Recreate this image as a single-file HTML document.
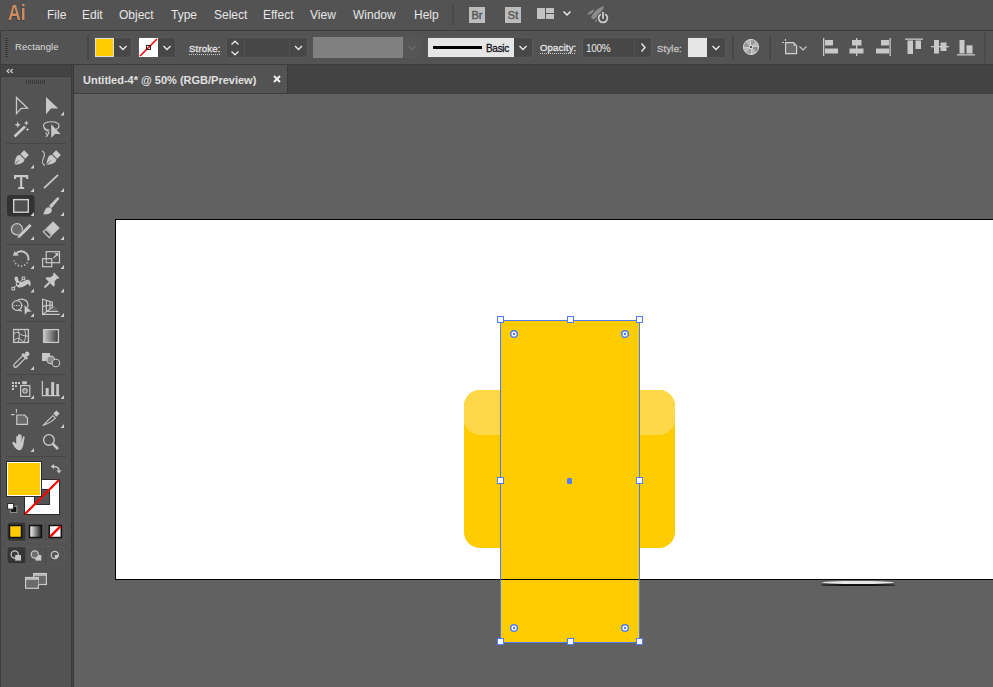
<!DOCTYPE html>
<html><head><meta charset="utf-8">
<style>
*{margin:0;padding:0;box-sizing:border-box}
html,body{width:993px;height:687px;overflow:hidden;background:#616161;font-family:"Liberation Sans",sans-serif}
.a{position:absolute}
#menubar{left:0;top:0;width:993px;height:30px;background:#535353}
#menuline{left:0;top:30px;width:993px;height:1px;background:#3d3d3d}
#ctrl{left:0;top:31px;width:993px;height:33px;background:#535353}
#ctrlline{left:0;top:64px;width:993px;height:1px;background:#3d3d3d}
#tabstrip{left:74px;top:65px;width:919px;height:28px;background:#434343}
#tab{left:74px;top:65px;width:214px;height:28px;background:#535353;border-right:1px solid #3a3a3a}
#tabline{left:74px;top:93px;width:919px;height:1px;background:#3d3d3d}
#canvas{left:74px;top:94px;width:919px;height:593px;background:#616161}
#tools{left:0;top:65px;width:71px;height:623px;background:#535353}
#toolshead{left:1px;top:65px;width:70px;height:11px;background:#434343;border-bottom:0}
#toolsheadline{left:1px;top:76px;width:70px;height:1px;background:#3d3d3d}
#toolsleft{left:0;top:65px;width:1px;height:622px;background:#3d3d3d}
#toolsedge{left:71px;top:65px;width:3px;height:622px;background:linear-gradient(90deg,#393939 0 1px,#454545 1px 2px,#393939 2px 3px)}
.menu{top:8px;font-size:12px;color:#e6e6e6;line-height:14px;white-space:nowrap}
.grp{background:#474747;border:1px solid #595959;border-radius:3px}
.lbl{font-size:11px;color:#d8d8d8;white-space:nowrap;line-height:13px}
</style></head><body>
<div id="menubar" class="a"></div>
<div id="menuline" class="a"></div>
<div id="ctrl" class="a"></div>
<div id="ctrlline" class="a"></div>
<div id="tabstrip" class="a"></div>
<div id="tab" class="a"></div>
<div id="tabline" class="a"></div>
<div id="canvas" class="a"></div>
<div id="tools" class="a"></div>
<div id="toolshead" class="a"></div>
<div id="toolsedge" class="a"></div>
<div id="toolsheadline" class="a"></div>
<div id="toolsleft" class="a"></div>

<!-- toolbar -->
<svg class="a" style="left:0;top:0" width="72" height="687">
<g fill="none" stroke="#c8c8c8" stroke-width="1.2">
 <path d="M9.3 69 L7 71 L9.3 73 M12.8 69 L10.5 71 L12.8 73"/>
</g>
<path d="M26.5 80 V84 M28.5 80 V84 M30.5 80 V84 M32.5 80 V84 M34.5 80 V84 M36.5 80 V84 M38.5 80 V84 M40.5 80 V84 M42.5 80 V84 M44.5 80 V84" stroke="#393939" stroke-width="1"/>
<g stroke="#464646" stroke-width="1">
 <path d="M6 143.5 H66 M6 244.5 H66 M6 321.5 H66 M6 374.5 H66 M6 403.5 H66 M6 456.5 H66"/>
</g>
<!-- corner triangles -->
<g fill="#d0d0d0">
 <path d="M60.5 115.5 L64 111.5 V115.5Z"/>
 <path d="M30.5 168.5 L34 164.5 V168.5Z"/>
 <path d="M30.5 192 L34 188 V192Z"/>
 <path d="M60.5 192 L64 188 V192Z"/>
 <path d="M30.5 216 L34 212 V216Z"/>
 <path d="M60.5 216 L64 212 V216Z"/>
 <path d="M30.5 240 L34 236 V240Z"/>
 <path d="M60.5 240 L64 236 V240Z"/>
 <path d="M30.5 269 L34 265 V269Z"/>
 <path d="M60.5 269 L64 265 V269Z"/>
 <path d="M30.5 292.5 L34 288.5 V292.5Z"/>
 <path d="M60.5 292.5 L64 288.5 V292.5Z"/>
 <path d="M30.5 317 L34 313 V317Z"/>
 <path d="M60.5 317 L64 313 V317Z"/>
 <path d="M30.5 370 L34 366 V370Z"/>
 <path d="M30.5 399 L34 395 V399Z"/>
 <path d="M60.5 399 L64 395 V399Z"/>
 <path d="M60.5 428 L64 424 V428Z"/>
 <path d="M30.5 452 L34 448 V452Z"/>
</g>
<!-- selection tools -->
<path d="M16.5 97.5 L27.5 108.2 L21.2 108.4 L16.5 113.6Z" fill="none" stroke="#c8c8c8" stroke-width="1.3" stroke-linejoin="miter"/>
<path d="M46 97 L58.3 108.6 L51 108.6 L46 114.3Z" fill="#c8c8c8"/>
<!-- magic wand -->
<path d="M14.5 136.5 L25 126.5" stroke="#c8c8c8" stroke-width="2.6"/>
<path d="M17.7 121.5 L18.6 123.9 L21 124.8 L18.6 125.7 L17.7 128.1 L16.8 125.7 L14.4 124.8 L16.8 123.9Z" fill="#c8c8c8"/>
<path d="M26.4 120.5 L27.2 122.2 L28.9 123 L27.2 123.8 L26.4 125.5 L25.6 123.8 L23.9 123 L25.6 122.2Z" fill="#c8c8c8"/>
<path d="M27.5 127.5 L28 129 L29.5 129.5 L28 130 L27.5 131.5 L27 130 L25.5 129.5 L27 129Z" fill="#c8c8c8"/>
<!-- lasso -->
<path d="M49.5 130 C46 130 43.5 128 43.5 125.8 C43.5 123.2 47 121.7 51.2 121.7 C55.5 121.7 59 123.2 59 125.8 C59 127.8 57.5 129 55.8 129.6" fill="none" stroke="#c8c8c8" stroke-width="1.1"/>
<path d="M44 127.8 C44.5 129.5 45.5 130.5 47 130.8 C49 131.2 49.5 133.5 48 134.3 C46.5 135 45.5 133.5 46.5 132.5 M47.5 134.5 C47.8 135.8 47 136.5 45.8 136.4" fill="none" stroke="#c8c8c8" stroke-width="1.1"/>
<path d="M51.2 124.2 L60.6 134 L55 134 L51.2 138Z" fill="#c8c8c8"/>
<!-- pen -->
<g transform="translate(20.6 158.6) rotate(45) scale(.88)">
 <path d="M0 10 C-2.5 7 -5 3 -5 0 L-3.8 -2.5 H3.8 L5 0 C5 3 2.5 7 0 10Z" fill="#c8c8c8"/>
 <rect x="-3.8" y="-9.5" width="7.6" height="6" fill="#c8c8c8"/>
 <path d="M0 10 V3" stroke="#535353" stroke-width="0.9"/>
</g>
<g transform="translate(52.6 158.6) rotate(45) scale(.88)">
 <path d="M0 10 C-2.5 7 -5 3 -5 0 L-3.8 -2.5 H3.8 L5 0 C5 3 2.5 7 0 10Z" fill="#c8c8c8"/>
 <rect x="-3.8" y="-9.5" width="7.6" height="6" fill="#c8c8c8"/>
 <path d="M0 10 V3" stroke="#535353" stroke-width="0.9"/>
</g>
<path d="M42 151 C45 152 45 155 43.5 158 C42 161 42 164 45 165.5" fill="none" stroke="#c8c8c8" stroke-width="1.1"/>
<!-- type -->
<path d="M15 179 V176.1 H27.2 V179 M21.2 176.1 V188 M18.2 188 H24.2" fill="none" stroke="#c8c8c8" stroke-width="2.1"/>
<!-- line -->
<path d="M44 188.2 L58 174.8" stroke="#c8c8c8" stroke-width="1.8"/>
<!-- rect tool selected -->
<rect x="7" y="195" width="27.6" height="21.5" rx="3" fill="#323232"/>
<path d="M30.5 216 L34 212 V216Z" fill="#d0d0d0"/>
<rect x="13.7" y="199.6" width="14.6" height="12.6" fill="#4f4f4f" stroke="#d0d0d0" stroke-width="1.4"/>
<!-- paintbrush -->
<path d="M57.2 197.5 C58.5 196.8 59.6 198 58.9 199.3 L51.5 208.2 L49 205.8Z" fill="#c8c8c8"/>
<path d="M43 214.3 C44.2 213 44.3 210.8 45.5 209 C46.8 207 49.5 206.6 51 208 C52.5 209.5 52 212 50 213.3 C48 214.5 45.2 214.6 43 214.3Z" fill="#c8c8c8"/>
<!-- shaper -->
<circle cx="17" cy="229.3" r="5.6" fill="#6a6a6a" stroke="#c8c8c8" stroke-width="1.3"/>
<path d="M29.6 223.6 L32 226 L20.3 237.6 L17 238.6 L17.9 235.2Z" fill="#c8c8c8" stroke="#535353" stroke-width="0.7"/>
<!-- eraser -->
<g transform="translate(51.2 229.8) rotate(45)">
 <rect x="-4.7" y="-7.4" width="9.4" height="10.2" fill="#c8c8c8"/>
 <rect x="-4.1" y="3.4" width="8.2" height="3.6" fill="none" stroke="#c8c8c8" stroke-width="1.2"/>
</g>
<!-- rotate -->
<path d="M15.94 253.54 A7.3 7.3 0 0 1 28.15 260.59" fill="none" stroke="#c8c8c8" stroke-width="1.8"/>
<path d="M27.42 262.35 A7.3 7.3 0 0 1 14.05 260.59" fill="none" stroke="#c8c8c8" stroke-width="1.5" stroke-dasharray="1.3 1.9"/>
<path d="M12.8 255.8 L14.6 251.2 L19 255.6Z" fill="#c8c8c8"/>
<!-- scale -->
<rect x="46.2" y="251.7" width="13.3" height="11" fill="none" stroke="#c8c8c8" stroke-width="1.2"/>
<rect x="42.6" y="258.7" width="9.2" height="8" fill="none" stroke="#c8c8c8" stroke-width="1.2"/>
<path d="M53.5 258 L57.5 254" stroke="#c8c8c8" stroke-width="1.2"/>
<path d="M54.5 253 H58.3 V256.8Z" fill="#c8c8c8"/>
<!-- warp/reshape -->
<path d="M14.5 278.5 C14.5 276.5 16.5 275.8 17.5 277 C18.5 278.2 18 280 19 281.5 C20.5 283 23 281.5 25 280.5 C27.5 279.3 29.5 279.5 30.3 281.5 C31 283.5 30.5 286 29.8 286.5 C29 285 28.5 283.5 27.5 284 C25.5 285.5 23 287.5 19.5 287.5 C17 287.5 16 285.5 16.3 283.5 C16.5 281.5 14.5 280.5 14.5 278.5Z" fill="#c8c8c8"/>
<path d="M13.3 288.5 L23.5 278.4" stroke="#c8c8c8" stroke-width="0.9"/>
<circle cx="18" cy="283.7" r="1.8" fill="#535353" stroke="#d8d8d8" stroke-width="1"/>
<rect x="12" y="287.3" width="2.6" height="2.6" fill="#535353" stroke="#d8d8d8" stroke-width="0.9"/>
<rect x="22.2" y="277.1" width="2.6" height="2.6" fill="#535353" stroke="#d8d8d8" stroke-width="0.9"/>
<!-- pin -->
<g transform="translate(51 281) rotate(45) scale(1.08)">
 <path d="M-3.5 -7.5 H3.5 V-6 H2.5 V-2 C4.5 -1 5.5 0.5 5.5 2 H-5.5 C-5.5 0.5 -4.5 -1 -2.5 -2 V-6 H-3.5Z" fill="#c8c8c8"/>
 <path d="M0 2 V8.5" stroke="#c8c8c8" stroke-width="1.8"/>
</g>
<!-- shape builder -->
<circle cx="17" cy="305.5" r="4.8" fill="none" stroke="#c8c8c8" stroke-width="1.2"/>
<path d="M17.5 300.5 C19 299 21 299 23 299.3 C26.5 300 28 302.5 28 305 C28 307 27 309 25 310.3 M22 311 C20 311 19 310.5 17.8 309.8" fill="none" stroke="#c8c8c8" stroke-width="1.2"/>
<path d="M13.5 305.5 H23" stroke="#d8d8d8" stroke-width="1.2" stroke-dasharray="1.2 1.3"/>
<path d="M24.2 304.8 L32.2 311.8 L27.5 312 L24.5 315.3Z" fill="#c8c8c8" stroke="#535353" stroke-width="0.5"/>
<!-- perspective grid -->
<path d="M52.3 306.8 H55.1 M52.3 309.1 H56.7" stroke="#7a7a7a" stroke-width="1.4"/>
<path d="M47 311.4 H58.2 M42.4 314.4 H59.8" stroke="#c8c8c8" stroke-width="1.1"/>
<g fill="none" stroke="#c8c8c8" stroke-width="1.2">
 <path d="M42.6 299.2 V314.4 L52.3 307.5 V302.3Z"/>
 <path d="M46.4 300.3 V311.7 M50 301.7 V309 M42.6 306.3 L52.3 304.8"/>
</g>
<!-- mesh -->
<rect x="13.6" y="329.5" width="14.8" height="12.9" fill="none" stroke="#c8c8c8" stroke-width="1.3"/>
<g fill="none" stroke="#c8c8c8" stroke-width="1">
 <path d="M17.6 329.5 C19.6 332 19.9 337 18.2 342.4"/>
 <path d="M24.3 329.5 C26 332.5 26.2 338 23.8 342.4"/>
 <path d="M13.6 334 C15.5 332.2 18 331.8 19.4 333.4 C21 335 23.5 336 28.4 336.2"/>
 <path d="M13.6 341 C15 339 17.5 337.8 19.2 338.5 C21 339.4 22.5 340.5 23.8 342.2"/>
</g>
<!-- gradient -->
<defs><linearGradient id="gr" x1="0" x2="1"><stop offset="0" stop-color="#c8c8c8"/><stop offset="1" stop-color="#3a3a3a"/></linearGradient>
<linearGradient id="gr2" x1="0" x2="1"><stop offset="0" stop-color="#ffffff"/><stop offset="1" stop-color="#1a1a1a"/></linearGradient></defs>
<rect x="43.6" y="329.6" width="14.8" height="12.8" fill="url(#gr)" stroke="#c8c8c8" stroke-width="1.3"/>
<!-- eyedropper -->
<g transform="translate(21 360) rotate(45)">
 <rect x="-2.3" y="-11" width="4.6" height="5" rx="2.3" fill="#c8c8c8"/>
 <rect x="-3.5" y="-6.5" width="7" height="2.6" fill="#c8c8c8"/>
 <path d="M-1.8 -4 V7 C-1.8 8.5 -1 9.5 0 9.5 C1 9.5 1.8 8.5 1.8 7 V-4" fill="none" stroke="#c8c8c8" stroke-width="1.2"/>
</g>
<!-- blend -->
<rect x="42" y="353" width="8" height="8" fill="#c8c8c8"/>
<circle cx="50.7" cy="359.9" r="3.8" fill="#888" stroke="#c8c8c8" stroke-width="1.1"/>
<circle cx="55.9" cy="363" r="3.8" fill="#535353" stroke="#c8c8c8" stroke-width="1.1"/>
<!-- symbol sprayer -->
<g fill="#c8c8c8">
 <rect x="12" y="382" width="2" height="2"/><rect x="15" y="382" width="2" height="2"/><rect x="18" y="382" width="2" height="2"/>
 <rect x="12" y="385" width="2" height="2"/><rect x="15" y="385" width="2" height="2"/>
 <rect x="12" y="388" width="2" height="2"/>
 <rect x="22.2" y="381.3" width="4.6" height="3"/>
</g>
<rect x="20.6" y="385.6" width="9.2" height="10.8" fill="none" stroke="#c8c8c8" stroke-width="1.2"/>
<circle cx="25" cy="390.8" r="2.2" fill="none" stroke="#c8c8c8" stroke-width="1.2"/>
<circle cx="25" cy="390.8" r="0.7" fill="#c8c8c8"/>
<!-- graph -->
<path d="M42.4 381 V395.6 H59.8" fill="none" stroke="#c8c8c8" stroke-width="1.2"/>
<g fill="#c8c8c8"><rect x="45.7" y="388" width="3" height="7"/><rect x="51.2" y="382.1" width="2.9" height="13"/><rect x="56.3" y="384" width="2.6" height="11"/></g>
<!-- artboard -->
<path d="M11.1 414.6 H14.6 M16.4 409 V412.8" stroke="#c8c8c8" stroke-width="1.1"/>
<path d="M16.8 415 H24.5 L27.5 418 V424.3 H16.8Z" fill="#6a6a6a" stroke="#c8c8c8" stroke-width="1.2"/>
<!-- slice/knife -->
<path d="M42.8 425.6 L52.8 415.6 L55.4 418.2 C52 421.5 47.5 424 42.8 425.6Z" fill="none" stroke="#c8c8c8" stroke-width="1.1" stroke-linejoin="round"/>
<path d="M53.2 413.6 L56.4 410.4 L59.6 413.6 L56.4 416.8Z" fill="#c8c8c8"/>
<!-- hand -->
<path d="M17 449.5 C15 448 13.5 445.5 12.5 443.5 C12 442.5 13 441.5 14 442 L16.2 443.8 V437 C16.2 435.8 18 435.8 18 437 V441.5 V435 C18 433.8 19.8 433.8 19.8 435 V441.5 V435.5 C19.8 434.3 21.6 434.3 21.6 435.5 V441.8 L22.8 437 C23.2 435.9 24.8 436.2 24.6 437.4 L23.5 444 C23 447 22 449 20.5 450 C19.5 450.5 18 450.3 17 449.5Z" fill="#c8c8c8"/>
<!-- zoom -->
<circle cx="48.9" cy="439.9" r="5.3" fill="none" stroke="#c8c8c8" stroke-width="1.4"/>
<path d="M52.6 443.6 L58 449" stroke="#c8c8c8" stroke-width="2.6"/>
<!-- fill/stroke -->
<rect x="24" y="479" width="36" height="36" fill="#2b2b2b"/>
<rect x="25" y="480" width="34" height="34" fill="#fff"/>
<rect x="34" y="489" width="16" height="16" fill="#2e2e2e"/>
<rect x="35" y="490" width="14" height="14" fill="#535353"/>
<path d="M25 514 L59 480" stroke="#f00" stroke-width="2.2"/>
<rect x="6" y="461" width="36" height="36" fill="#2b2b2b"/>
<rect x="7" y="462" width="34" height="34" fill="#fff"/>
<rect x="8" y="463" width="32" height="32" fill="#ffcc00"/>
<!-- swap -->
<path d="M53 466.5 C57 466.5 59 467.5 59 470.5" fill="none" stroke="#c8c8c8" stroke-width="1.3"/>
<path d="M50.8 466.5 L54 464 V469Z" fill="#c8c8c8"/>
<path d="M59 473.5 L56.5 470.2 H61.5Z" fill="#c8c8c8"/>
<!-- default -->
<rect x="10.4" y="506.3" width="6.5" height="6.1" fill="#111" stroke="#9a9a9a" stroke-width="1"/>
<rect x="7.6" y="503.5" width="6" height="5.6" fill="#fff" stroke="#2a2a2a" stroke-width="1"/>
<!-- color mode group -->
<rect x="7" y="522" width="57.5" height="19.3" rx="3" fill="#535353" stroke="#5b5b5b" stroke-width="1"/>
<path d="M7.5 525 A2.5 2.5 0 0 1 10 522.5 H25.3 V540.8 H10 A2.5 2.5 0 0 1 7.5 538.3Z" fill="#363636"/>
<path d="M25.5 522.5 V540.8 M45.5 522.5 V540.8" stroke="#4a4a4a" stroke-width="1"/>
<rect x="9.5" y="525.5" width="12" height="12" fill="#ffcc00" stroke="#111" stroke-width="1.5"/>
<rect x="29.5" y="525.5" width="12" height="12" fill="url(#gr2)" stroke="#111" stroke-width="1.5"/>
<rect x="49.3" y="525.5" width="12" height="12" fill="#fff" stroke="#111" stroke-width="1.5"/>
<path d="M50.2 536.6 L60.4 526.4" stroke="#f00" stroke-width="2.4"/>
<!-- draw mode group -->
<rect x="7" y="546.8" width="57.5" height="17" rx="3" fill="#535353" stroke="#5b5b5b" stroke-width="1"/>
<path d="M7.5 549.8 A2.5 2.5 0 0 1 10 547.3 H25.3 V563.3 H10 A2.5 2.5 0 0 1 7.5 560.8Z" fill="#363636"/>
<path d="M25.5 547.3 V563.3 M45.5 547.3 V563.3" stroke="#4a4a4a" stroke-width="1"/>
<circle cx="14.7" cy="554.5" r="3.6" fill="#3a3a3a" stroke="#c8c8c8" stroke-width="1.2"/>
<rect x="15.2" y="555" width="5.8" height="5.6" fill="#c8c8c8"/>
<rect x="35.5" y="555" width="5.8" height="5.6" fill="#c8c8c8"/>
<circle cx="34.8" cy="554.5" r="3.6" fill="#6e6e6e" stroke="#c8c8c8" stroke-width="1.2"/>
<circle cx="54.8" cy="555" r="3.6" fill="#535353" stroke="#c8c8c8" stroke-width="1.2"/>
<path d="M54.8 555 H58.4 A3.6 3.6 0 0 1 54.8 558.6Z" fill="#c8c8c8"/>
<!-- screen mode -->
<rect x="33.6" y="573.5" width="12.8" height="11" fill="#6a6a6a" stroke="#c8c8c8" stroke-width="1.2"/>
<path d="M33.6 575 H46.4" stroke="#c8c8c8" stroke-width="1.6"/>
<rect x="25.6" y="577.5" width="12.8" height="10.8" fill="#6a6a6a" stroke="#c8c8c8" stroke-width="1.2"/>
<path d="M25.6 579 H38.4" stroke="#c8c8c8" stroke-width="1.6"/>
<rect x="34.2" y="580" width="4.2" height="4.5" fill="#6a6a6a"/>
</svg>

<!-- menu -->
<div class="a" style="left:8px;top:2px;font-size:22px;font-weight:bold;color:#cd8a5d;line-height:22px;transform:scaleX(.8);transform-origin:0 0;text-shadow:-0.5px 1px 1px rgba(0,0,0,.3)">Ai</div>
<div class="a menu" style="left:47px">File</div>
<div class="a menu" style="left:82px">Edit</div>
<div class="a menu" style="left:119px">Object</div>
<div class="a menu" style="left:171px">Type</div>
<div class="a menu" style="left:214px">Select</div>
<div class="a menu" style="left:263px">Effect</div>
<div class="a menu" style="left:310px">View</div>
<div class="a menu" style="left:353px">Window</div>
<div class="a menu" style="left:414px">Help</div>



<!-- menubar icons -->
<div class="a" style="left:452px;top:5px;width:2px;height:20px;background:#494949"></div>
<div class="a" style="left:469px;top:7px;width:16px;height:16px;background:#bdbdbd"></div>
<div class="a" style="left:469px;top:7px;width:16px;height:16px;font-size:11px;line-height:17px;text-align:center;color:#5a5a5a;-webkit-text-stroke:0.5px #5a5a5a;letter-spacing:0px">Br</div>
<div class="a" style="left:505px;top:7px;width:16px;height:16px;background:#bdbdbd"></div>
<div class="a" style="left:505px;top:7px;width:16px;height:16px;font-size:11px;line-height:17px;text-align:center;color:#5a5a5a;-webkit-text-stroke:0.5px #5a5a5a;letter-spacing:0px">St</div>
<svg class="a" style="left:537px;top:7px" width="36" height="14">
 <rect x="0" y="1" width="8" height="11" fill="#c2c2c2"/>
 <rect x="9" y="1" width="8" height="5" fill="#c2c2c2"/>
 <rect x="9" y="7" width="8" height="5" fill="#c2c2c2"/>
 <path d="M26.5 4.5 L30 8 L33.5 4.5" fill="none" stroke="#e8e8e8" stroke-width="1.5"/>
</svg>
<svg class="a" style="left:582px;top:2px" width="30" height="26">
 <path d="M22 4 C16.5 5.5 11.5 10 9 15.5 L11.5 17.5 C16.5 14 20.5 9.5 22 4 Z" fill="#8c8c8c"/>
 <path d="M5 12.5 C7 9.8 9.5 8 12.5 7.2 L10.2 11.2 L5.5 12.8 Z" fill="#8c8c8c"/>
 <path d="M13 20.8 C13 19 14 17.2 15.5 16 L15.2 18.6 Z" fill="#8c8c8c"/>
 <path d="M18.6 12.6 A4.4 4.4 0 1 0 23.4 12.6" fill="none" stroke="#535353" stroke-width="3.6"/>
 <circle cx="21" cy="16" r="4.4" fill="none" stroke="#535353" stroke-width="3.5"/>
 <path d="M21 9 V17" stroke="#535353" stroke-width="3.6"/>
 <path d="M18.8 12.2 A4.4 4.4 0 1 0 23.2 12.2" fill="none" stroke="#cfcfcf" stroke-width="1.7"/>
 <path d="M21 10 V16.8" stroke="#cfcfcf" stroke-width="1.8"/>
</svg>

<!-- control bar -->
<div class="a" style="left:0;top:31px;width:1px;height:33px;background:#3d3d3d"></div>
<div class="a" style="left:5px;top:38px;width:3px;height:19px;background:repeating-linear-gradient(#393939 0 1px,transparent 1px 2px)"></div>
<div class="a lbl" style="left:15px;top:41px;font-size:9.5px;line-height:12px;color:#dcdcdc;letter-spacing:0.1px">Rectangle</div>
<div class="a" style="left:87px;top:35px;width:2px;height:25px;background:#484848"></div>

<div class="a grp" style="left:94px;top:37px;width:38px;height:21px"></div>
<div class="a" style="left:95px;top:38px;width:19px;height:19px;background:#ddd"></div>
<div class="a" style="left:96px;top:39px;width:17px;height:17px;background:#ffcc00"></div>
<svg class="a" style="left:114px;top:37px" width="18" height="21"><path d="M5.5 9 L9 12.5 L12.5 9" fill="none" stroke="#e8e8e8" stroke-width="1.4"/></svg>

<div class="a grp" style="left:138px;top:37px;width:38px;height:21px"></div>
<div class="a" style="left:139px;top:38px;width:19px;height:19px;background:#fff"></div>
<svg class="a" style="left:139px;top:38px" width="19" height="19"><line x1="1" y1="18" x2="18" y2="1" stroke="#f00" stroke-width="1.6"/><rect x="7.5" y="7.5" width="4" height="4" fill="none" stroke="#222" stroke-width="1"/></svg>
<svg class="a" style="left:158px;top:37px" width="18" height="21"><path d="M5.5 9 L9 12.5 L12.5 9" fill="none" stroke="#e8e8e8" stroke-width="1.4"/></svg>

<div class="a lbl" style="left:189px;top:43px;font-size:9.5px;line-height:12px;color:#e4e4e4;-webkit-text-stroke:0.3px;letter-spacing:0.2px">Stroke:</div>
<div class="a" style="left:189px;top:54px;width:31px;height:1px;background:repeating-linear-gradient(90deg,#cfcfcf 0 1px,transparent 1px 2px)"></div>

<div class="a grp" style="left:226px;top:37px;width:82px;height:21px"></div>
<div class="a" style="left:244px;top:38px;width:1px;height:19px;background:#525252"></div>
<div class="a" style="left:289px;top:38px;width:1px;height:19px;background:#525252"></div>
<svg class="a" style="left:227px;top:38px" width="17" height="21"><path d="M4.5 6.5 L8 3.2 L11.5 6.5 M4.5 13.5 L8 16.8 L11.5 13.5" fill="none" stroke="#e8e8e8" stroke-width="1.3"/></svg>
<svg class="a" style="left:290px;top:37px" width="18" height="21"><path d="M5 9 L8.5 12.5 L12 9" fill="none" stroke="#e8e8e8" stroke-width="1.4"/></svg>

<div class="a" style="left:313px;top:37px;width:90px;height:21px;background:#808080"></div>
<div class="a" style="left:403px;top:37px;width:18px;height:21px;background:#565656;border-radius:0 3px 3px 0"></div>
<svg class="a" style="left:403px;top:37px" width="18" height="21"><path d="M5.5 9 L9 12.5 L12.5 9" fill="none" stroke="#6a6a6a" stroke-width="1.4"/></svg>

<div class="a grp" style="left:427px;top:37px;width:106px;height:21px"></div>
<div class="a" style="left:428px;top:38px;width:86px;height:19px;background:#e6e6e6"></div>
<div class="a" style="left:433px;top:46px;width:49px;height:3px;background:#000"></div>
<div class="a lbl" style="left:486px;top:43px;font-size:10px;line-height:12px;color:#141420;-webkit-text-stroke:0.3px;letter-spacing:-0.3px">Basic</div>
<svg class="a" style="left:514px;top:37px" width="18" height="21"><path d="M5.5 9 L9 12.5 L12.5 9" fill="none" stroke="#e8e8e8" stroke-width="1.4"/></svg>

<div class="a lbl" style="left:540px;top:42px;font-size:9.5px;line-height:12px;color:#e4e4e4;-webkit-text-stroke:0.3px;letter-spacing:0.2px">Opacity:</div>
<div class="a" style="left:540px;top:53px;width:36px;height:1px;background:repeating-linear-gradient(90deg,#cfcfcf 0 1px,transparent 1px 2px)"></div>

<div class="a grp" style="left:582px;top:37px;width:70px;height:21px"></div>
<div class="a" style="left:634px;top:38px;width:1px;height:19px;background:#525252"></div>
<div class="a lbl" style="left:586px;top:43px;font-size:10px;line-height:12px;color:#ececec;letter-spacing:-0.3px">100%</div>
<svg class="a" style="left:635px;top:37px" width="17" height="21"><path d="M6.5 6.5 L10 10.5 L6.5 14.5" fill="none" stroke="#e8e8e8" stroke-width="1.4"/></svg>

<div class="a lbl" style="left:657px;top:43px;font-size:9.5px;line-height:12px;color:#c4c4c4;-webkit-text-stroke:0.3px;letter-spacing:0.2px">Style:</div>
<div class="a grp" style="left:687px;top:37px;width:39px;height:21px"></div>
<div class="a" style="left:688px;top:38px;width:19px;height:19px;background:#e6e6e6"></div>
<svg class="a" style="left:707px;top:37px" width="18" height="21"><path d="M5.5 9 L9 12.5 L12.5 9" fill="none" stroke="#e8e8e8" stroke-width="1.4"/></svg>

<div class="a" style="left:732px;top:35px;width:2px;height:25px;background:#484848"></div>
<div class="a" style="left:769px;top:35px;width:2px;height:25px;background:#484848"></div>
<div class="a" style="left:984px;top:32px;width:2px;height:31px;background:#4a4a4a"></div>


<svg class="a" style="left:742px;top:38px" width="18" height="18">
 <circle cx="9" cy="9" r="7.6" fill="#b8b8b8" stroke="#d0d0d0" stroke-width="1"/>
 <g stroke="#d8d8d8" stroke-width="1.1">
  <line x1="9" y1="1.5" x2="9" y2="16.5"/><line x1="1.5" y1="9" x2="16.5" y2="9"/>
  <line x1="3.7" y1="3.7" x2="14.3" y2="14.3"/><line x1="14.3" y1="3.7" x2="3.7" y2="14.3"/>
 </g>
 <path d="M9 9 L9 2 A7 7 0 0 1 14 4 Z" fill="#9a9a9a"/>
 <path d="M9 9 L16 9 A7 7 0 0 1 14 14 Z" fill="#8e8e8e"/>
 <path d="M9 9 L9 16 A7 7 0 0 1 4 14 Z" fill="#a0a0a0"/>
 <path d="M9 9 L2 9 A7 7 0 0 1 4 4 Z" fill="#969696"/>
 <circle cx="9" cy="9" r="2.2" fill="#d8d8d8"/>
 <circle cx="9" cy="9" r="1.1" fill="#333"/>
</svg>
<svg class="a" style="left:780px;top:37px" width="30" height="20">
 <path d="M2 5.5 H4" stroke="#d0d0d0" stroke-width="1.2"/>
 <path d="M5.5 2 V4" stroke="#d0d0d0" stroke-width="1.2"/>
 <path d="M5.6 5.6 H13.5 L16.6 8.7 V16.6 H5.6 Z" fill="#6a6a6a" stroke="#d0d0d0" stroke-width="1.2"/>
 <path d="M13.5 5.6 V8.7 H16.6" fill="#c0c0c0"/>
 <path d="M19.5 9.5 L23 13 L26.5 9.5" fill="none" stroke="#c8c8c8" stroke-width="1.2"/>
</svg>
<svg class="a" style="left:820px;top:36px" width="160" height="22" fill="#c8c8c8">
 <rect x="3" y="2" width="1.3" height="18"/><rect x="5" y="4" width="8" height="5.5"/><rect x="5" y="12.5" width="13" height="5"/>
 <rect x="36" y="2" width="1.3" height="18"/><rect x="32" y="4" width="9.5" height="5.5"/><rect x="29.5" y="12.5" width="14" height="5"/>
 <rect x="69.5" y="2" width="1.3" height="18"/><rect x="61" y="4" width="8" height="5.5"/><rect x="56" y="12.5" width="13" height="5"/>
 <rect x="85" y="2.5" width="18" height="1.3"/><rect x="87.5" y="4.5" width="5.5" height="13.5"/><rect x="95.5" y="4.5" width="5.5" height="8.5"/>
 <rect x="111" y="10" width="18" height="1.3"/><rect x="114" y="4" width="5" height="13.5"/><rect x="120.5" y="6.5" width="6" height="8.5"/>
 <rect x="137" y="18.2" width="18" height="1.3"/><rect x="139.5" y="4" width="5" height="13.5"/><rect x="146.5" y="9.3" width="6" height="8.2"/>
</svg>

<!-- tab -->
<div class="a" style="left:83px;top:73px;font-size:11px;font-weight:bold;color:#e0e0e0;line-height:14px;white-space:nowrap">Untitled-4* @ 50% (RGB/Preview)</div>

<!-- artboard -->
<div class="a" style="left:115px;top:219px;width:900px;height:361px;background:#000"></div>
<div class="a" style="left:116px;top:220px;width:900px;height:359px;background:#fff"></div>


<svg class="a" style="left:273px;top:75px" width="8" height="8"><path d="M1 1 L7 7 M7 1 L1 7" stroke="#f0f0f0" stroke-width="2"/></svg>

<!-- shapes -->
<div class="a" style="left:464px;top:390px;width:211px;height:158px;background:#ffcc00;border-radius:16px"></div>
<div class="a" style="left:464px;top:390px;width:211px;height:45px;background:#ffd84a;border-radius:16px"></div>
<div class="a" style="left:500px;top:320px;width:140px;height:323px;background:#ffcc00"></div>
<div class="a" style="left:115px;top:579px;width:900px;height:1px;background:#000"></div>
<div class="a" style="left:822px;top:581px;width:72px;height:3px;background:#e8e8e8;border-radius:50%;filter:blur(0.7px)"></div>
<div class="a" style="left:821px;top:584px;width:74px;height:1.5px;background:#111;border-radius:50%;filter:blur(0.5px)"></div>
<!-- selection -->
<svg class="a" style="left:490px;top:310px" width="160" height="345">
 <rect x="10.5" y="10.5" width="139" height="322" fill="none" stroke="#4f7df9" stroke-width="1"/>
 <g fill="#fff" stroke="#4f7df9" stroke-width="1">
  <rect x="7.5" y="6.5" width="6" height="6"/>
  <rect x="77.5" y="6.5" width="6" height="6"/>
  <rect x="146.5" y="6.5" width="6" height="6"/>
  <rect x="7.5" y="167.5" width="6" height="6"/>
  <rect x="146.5" y="167.5" width="6" height="6"/>
  <rect x="7.5" y="328.5" width="6" height="6"/>
  <rect x="77.5" y="328.5" width="6" height="6"/>
  <rect x="146.5" y="328.5" width="6" height="6"/>
 </g>
 <g>
  <circle cx="24" cy="24" r="3.3" fill="#fff" stroke="#4f7df9" stroke-width="1.5"/><circle cx="24" cy="24" r="1.2" fill="#4f7df9"/>
  <circle cx="135" cy="24" r="3.3" fill="#fff" stroke="#4f7df9" stroke-width="1.5"/><circle cx="135" cy="24" r="1.2" fill="#4f7df9"/>
  <circle cx="24" cy="318" r="3.3" fill="#fff" stroke="#4f7df9" stroke-width="1.5"/><circle cx="24" cy="318" r="1.2" fill="#4f7df9"/>
  <circle cx="135" cy="318" r="3.3" fill="#fff" stroke="#4f7df9" stroke-width="1.5"/><circle cx="135" cy="318" r="1.2" fill="#4f7df9"/>
 </g>
 <rect x="77" y="168" width="5" height="6" rx="1.5" fill="#4f7df9"/>
</svg>
</body></html>
